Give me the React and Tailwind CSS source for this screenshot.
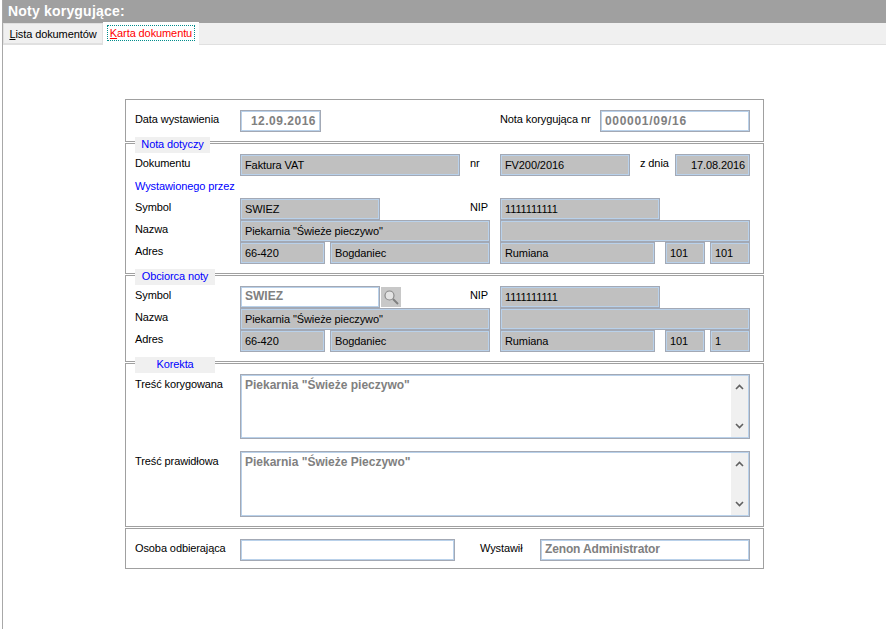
const sans = "font-['Liberation_Sans',Arial,sans-serif]";

function Field({ w, ml = "", value = "", kind = "gray", align = "", track = "" }) {
  const look =
    kind === "gray"
      ? "bg-[#c0c0c0] text-black text-[11px] font-normal tracking-[-0.1px]"
      : `bg-white text-[#808080] text-[12px] font-bold ${track}`;
  return (
    <div
      className={`${w} ${ml} ${look} ${align} h-[22px] shrink-0 border border-[#a3a9b5] shadow-[inset_0_0_0_1px_#b9d1ea] px-[4px] flex items-center whitespace-nowrap overflow-hidden`}
    >
      {value}
    </div>
  );
}

function Label({ children, w = "w-[105px]", ml = "", mt = "-mt-[3px]" }) {
  return <div className={`${w} ${ml} ${mt} shrink-0 text-[11px] tracking-[-0.1px] text-black whitespace-nowrap`}>{children}</div>;
}

function Row({ children }) {
  return <div className="flex items-center h-[22px]">{children}</div>;
}

function Section({ h, legend, legendW = "w-[80px]", children, pt }) {
  return (
    <section className={`${h} ${pt} relative border border-[#a0a0a0] pl-[9px] flex flex-col`}>
      {legend && (
        <div
          className={`absolute -top-[7px] left-[9px] ${legendW} h-[16px] pb-[1px] bg-[#f0f0f0] text-[#0000ff] text-[11px] tracking-[-0.1px] flex items-center justify-center`}
        >
          {legend}
        </div>
      )}
      {children}
    </section>
  );
}

function Chevron({ up }) {
  return (
    <svg width="9" height="6" viewBox="0 0 9 6" fill="none" stroke="#606060" strokeWidth="1.6">
      <path d={up ? "M1 5 L4.5 1.5 L8 5" : "M1 1 L4.5 4.5 L8 1"} />
    </svg>
  );
}

function Memo({ value, h }) {
  return (
    <div className={`w-[510px] ${h} shrink-0 bg-white border border-[#a3a9b5] shadow-[inset_0_0_0_1px_#b9d1ea] p-[1px] flex`}>
      <div className="flex-1 px-[3px] text-[12px] font-bold text-[#808080] whitespace-nowrap">
        {value}
      </div>
      <div className="w-[17px] bg-[#f0f0f0] flex flex-col items-center justify-between py-[8px]">
        <Chevron up />
        <Chevron />
      </div>
    </div>
  );
}

export default function App() {
  return (
    <div className={`w-[886px] h-[629px] bg-white relative overflow-hidden flex flex-col pl-[2px] ${sans}`}>
      <div className="flex-1 flex flex-col border-l border-[#a8a8a8]">
        <div className="h-[23px] bg-[#a0a0a0] text-white font-bold text-[14px] tracking-[0.2px] pl-[5px] flex items-center shrink-0">
          Noty korygujące:
        </div>
        <div className="h-[22px] bg-[#f0f0f0] flex items-end shrink-0 border-b border-[#e0e0e0]">
          <div className="w-[100px] h-[21px] pt-[1px] bg-[#f0f0f0] border border-[#e0e0e0] text-[11px] tracking-[-0.1px] text-black flex items-center justify-center">
            <span><span className="underline">L</span>ista dokumentów</span>
          </div>
          <div className="w-[96px] h-[23px] -mb-[1px] bg-white flex items-start justify-center pt-[3px]">
            <div className="border border-dotted border-[#008c8c] text-[11px] tracking-[-0.1px] text-[#ff0000] px-[2px] h-[16px] flex items-center">
              <span><span className="underline">K</span>arta dokumentu</span>
            </div>
          </div>
        </div>
        <main className="w-[639px] ml-[122px] mt-[54px] flex flex-col gap-[1px]">
          <Section h="h-[43px]" pt="pt-[10px]">
            <Row>
              <Label>Data wystawienia</Label>
              <Field w="w-[81px]" kind="white" value="12.09.2016" align="justify-end" track="tracking-[0.5px]" />
              <Label w="w-[100px]" ml="ml-[179px]">Nota korygująca nr</Label>
              <Field w="w-[150px]" kind="white" value="000001/09/16" track="tracking-[0.7px]" />
            </Row>
          </Section>

          <Section h="h-[131px]" pt="pt-[10px]" legend="Nota dotyczy" legendW="w-[75px]">
            <Row>
              <Label>Dokumentu</Label>
              <Field w="w-[220px]" value="Faktura VAT" />
              <Label w="w-[30px]" ml="ml-[10px]">nr</Label>
              <Field w="w-[130px]" value="FV200/2016" />
              <Label w="w-[35px]" ml="ml-[10px]">z dnia</Label>
              <Field w="w-[75px]" value="17.08.2016" align="justify-end" />
            </Row>
            <div className="h-[22px] text-[11px] tracking-[-0.1px] text-[#0000ff] flex items-center pb-[2px]">Wystawionego przez</div>
            <Row>
              <Label>Symbol</Label>
              <Field w="w-[140px]" value="SWIEZ" />
              <Label w="w-[30px]" ml="ml-[90px]">NIP</Label>
              <Field w="w-[160px]" value="1111111111" />
            </Row>
            <Row>
              <Label>Nazwa</Label>
              <Field w="w-[250px]" value={'Piekarnia "Świeże pieczywo"'} />
              <Field w="w-[250px]" ml="ml-[10px]" />
            </Row>
            <Row>
              <Label>Adres</Label>
              <Field w="w-[85px]" value="66-420" />
              <Field w="w-[160px]" ml="ml-[5px]" value="Bogdaniec" />
              <Field w="w-[155px]" ml="ml-[10px]" value="Rumiana" />
              <Field w="w-[40px]" ml="ml-[10px]" value="101" />
              <Field w="w-[40px]" ml="ml-[5px]" value="101" />
            </Row>
          </Section>

          <Section h="h-[87px]" pt="pt-[10px]" legend="Obciorca noty">
            <Row>
              <Label>Symbol</Label>
              <Field w="w-[140px]" kind="white" value="SWIEZ" track="pb-[2px]" />
              <div className="w-[20px] h-[20px] ml-[1px] bg-[#c8c8c8] flex items-center justify-center shrink-0">
                <svg width="18" height="18" viewBox="0 0 18 18" fill="none">
                  <circle cx="7.5" cy="7.5" r="4.5" stroke="#8a8a8a" strokeWidth="1.2" fill="#e4e4e4" />
                  <path d="M11 11 L16 16" stroke="#808080" strokeWidth="2" />
                </svg>
              </div>
              <Label w="w-[30px]" ml="ml-[69px]">NIP</Label>
              <Field w="w-[160px]" value="1111111111" />
            </Row>
            <Row>
              <Label>Nazwa</Label>
              <Field w="w-[250px]" value={'Piekarnia "Świeże pieczywo"'} />
              <Field w="w-[250px]" ml="ml-[10px]" />
            </Row>
            <Row>
              <Label>Adres</Label>
              <Field w="w-[85px]" value="66-420" />
              <Field w="w-[160px]" ml="ml-[5px]" value="Bogdaniec" />
              <Field w="w-[155px]" ml="ml-[10px]" value="Rumiana" />
              <Field w="w-[40px]" ml="ml-[10px]" value="101" />
              <Field w="w-[40px]" ml="ml-[5px]" value="1" />
            </Row>
          </Section>

          <Section h="h-[164px]" pt="pt-[10px]" legend="Korekta">
            <div className="flex items-start h-[65px]">
              <Label mt="mt-[2px]">Treść korygowana</Label>
              <Memo h="h-[65px]" value={'Piekarnia "Świeże pieczywo"'} />
            </div>
            <div className="flex items-start h-[66px] mt-[12px]">
              <Label mt="mt-[2px]">Treść prawidłowa</Label>
              <Memo h="h-[66px]" value={'Piekarnia "Świeże Pieczywo"'} />
            </div>
          </Section>

          <Section h="h-[41px]" pt="pt-[10px]">
            <Row>
              <Label>Osoba odbierająca</Label>
              <Field w="w-[215px]" kind="white" />
              <Label w="w-[60px]" ml="ml-[25px]">Wystawił</Label>
              <Field w="w-[210px]" kind="white" value="Zenon Administrator" track="pb-[2px] tracking-[-0.15px]" />
            </Row>
          </Section>
        </main>
      </div>
    </div>
  );
}
